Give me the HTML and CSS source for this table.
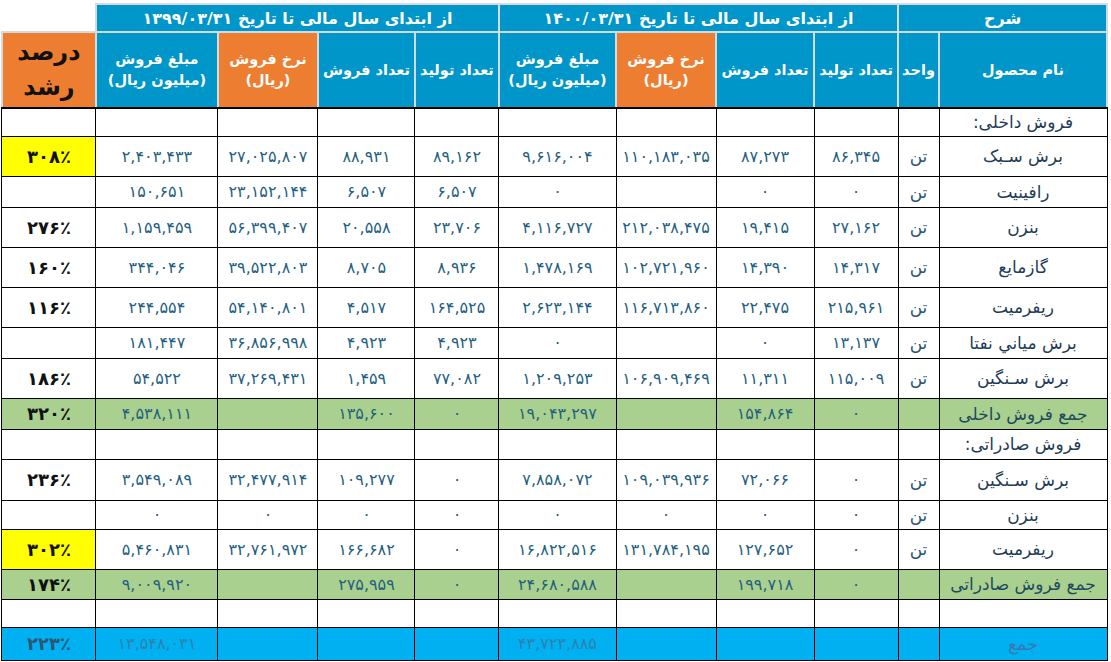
FILE: index.html
```html
<!DOCTYPE html>
<html lang="fa" dir="rtl">
<head>
<meta charset="utf-8">
<title>گزارش فروش</title>
<link rel="stylesheet" href="styles.css">
</head>
<body>
<table class="report">
  <colgroup>
    <col class="c-name"><col class="c-unit"><col class="c-prod"><col class="c-sales"><col class="c-rate"><col class="c-amt">
    <col class="c-prod2"><col class="c-sales2"><col class="c-rate2"><col class="c-amt2"><col class="c-pct">
  </colgroup>
  <thead>
    <tr class="h1">
      <th colspan="2" class="hb">شرح</th>
      <th colspan="4" class="hb">از ابتدای سال مالی تا تاریخ ۱۴۰۰/۰۳/۳۱</th>
      <th colspan="4" class="hb">از ابتدای سال مالی تا تاریخ ۱۳۹۹/۰۳/۳۱</th>
      <th class="corner"></th>
    </tr>
    <tr class="h2">
      <th class="hb">نام محصول</th>
      <th class="hb">واحد</th>
      <th class="hb">تعداد تولید</th>
      <th class="hb">تعداد فروش</th>
      <th class="ho">نرخ فروش<br>(ریال)</th>
      <th class="hb">مبلغ فروش<br>(میلیون ریال)</th>
      <th class="hb">تعداد تولید</th>
      <th class="hb">تعداد فروش</th>
      <th class="ho">نرخ فروش<br>(ریال)</th>
      <th class="hb">مبلغ فروش<br>(میلیون ریال)</th>
      <th class="ho pct-h">درصد<br>رشد</th>
    </tr>
  </thead>
  <tbody>
    <tr class="r28"><td class="name">فروش داخلی:</td><td></td><td></td><td></td><td></td><td></td><td></td><td></td><td></td><td></td><td></td></tr>
    <tr class="r40"><td class="name">برش سـبک</td><td class="unit">تن</td><td>۸۶,۳۴۵</td><td>۸۷,۲۷۳</td><td>۱۱۰,۱۸۳,۰۳۵</td><td>۹,۶۱۶,۰۰۴</td><td>۸۹,۱۶۲</td><td>۸۸,۹۳۱</td><td>۲۷,۰۲۵,۸۰۷</td><td>۲,۴۰۳,۴۳۳</td><td class="pct yellow">۳۰۸٪</td></tr>
    <tr class="r31"><td class="name">رافینیت</td><td class="unit">تن</td><td>۰</td><td>۰</td><td></td><td>۰</td><td>۶,۵۰۷</td><td>۶,۵۰۷</td><td>۲۳,۱۵۲,۱۴۴</td><td>۱۵۰,۶۵۱</td><td class="pct"></td></tr>
    <tr class="r40"><td class="name">بنزن</td><td class="unit">تن</td><td>۲۷,۱۶۲</td><td>۱۹,۴۱۵</td><td>۲۱۲,۰۳۸,۴۷۵</td><td>۴,۱۱۶,۷۲۷</td><td>۲۳,۷۰۶</td><td>۲۰,۵۵۸</td><td>۵۶,۳۹۹,۴۰۷</td><td>۱,۱۵۹,۴۵۹</td><td class="pct">۲۷۶٪</td></tr>
    <tr class="r40"><td class="name">گازمایع</td><td class="unit">تن</td><td>۱۴,۳۱۷</td><td>۱۴,۳۹۰</td><td>۱۰۲,۷۲۱,۹۶۰</td><td>۱,۴۷۸,۱۶۹</td><td>۸,۹۳۶</td><td>۸,۷۰۵</td><td>۳۹,۵۲۲,۸۰۳</td><td>۳۴۴,۰۴۶</td><td class="pct">۱۶۰٪</td></tr>
    <tr class="r40"><td class="name">ریفرمیت</td><td class="unit">تن</td><td>۲۱۵,۹۶۱</td><td>۲۲,۴۷۵</td><td>۱۱۶,۷۱۳,۸۶۰</td><td>۲,۶۲۳,۱۴۴</td><td>۱۶۴,۵۲۵</td><td>۴,۵۱۷</td><td>۵۴,۱۴۰,۸۰۱</td><td>۲۴۴,۵۵۴</td><td class="pct">۱۱۶٪</td></tr>
    <tr class="r31"><td class="name">برش میاني نفتا</td><td class="unit">تن</td><td>۱۳,۱۳۷</td><td>۰</td><td></td><td>۰</td><td>۴,۹۲۳</td><td>۴,۹۲۳</td><td>۳۶,۸۵۶,۹۹۸</td><td>۱۸۱,۴۴۷</td><td class="pct"></td></tr>
    <tr class="r40"><td class="name">برش سـنگین</td><td class="unit">تن</td><td>۱۱۵,۰۰۹</td><td>۱۱,۳۱۱</td><td>۱۰۶,۹۰۹,۴۶۹</td><td>۱,۲۰۹,۲۵۳</td><td>۷۷,۰۸۲</td><td>۱,۴۵۹</td><td>۳۷,۲۶۹,۴۳۱</td><td>۵۴,۵۲۲</td><td class="pct">۱۸۶٪</td></tr>
    <tr class="r31 green"><td class="name">جمع فروش داخلی</td><td></td><td>۰</td><td>۱۵۴,۸۶۴</td><td></td><td>۱۹,۰۴۳,۲۹۷</td><td>۰</td><td>۱۳۵,۶۰۰</td><td></td><td>۴,۵۳۸,۱۱۱</td><td class="pct">۳۲۰٪</td></tr>
    <tr class="r30"><td class="name">فروش صادراتی:</td><td></td><td></td><td></td><td></td><td></td><td></td><td></td><td></td><td></td><td></td></tr>
    <tr class="r41"><td class="name">برش سـنگین</td><td class="unit">تن</td><td>۰</td><td>۷۲,۰۶۶</td><td>۱۰۹,۰۳۹,۹۳۶</td><td>۷,۸۵۸,۰۷۲</td><td>۰</td><td>۱۰۹,۲۷۷</td><td>۳۲,۴۷۷,۹۱۴</td><td>۳,۵۴۹,۰۸۹</td><td class="pct">۲۳۶٪</td></tr>
    <tr class="r29"><td class="name">بنزن</td><td class="unit">تن</td><td>۰</td><td>۰</td><td>۰</td><td>۰</td><td>۰</td><td>۰</td><td>۰</td><td>۰</td><td class="pct"></td></tr>
    <tr class="r40"><td class="name">ریفرمیت</td><td class="unit">تن</td><td>۰</td><td>۱۲۷,۶۵۲</td><td>۱۳۱,۷۸۴,۱۹۵</td><td>۱۶,۸۲۲,۵۱۶</td><td>۰</td><td>۱۶۶,۶۸۲</td><td>۳۲,۷۶۱,۹۷۲</td><td>۵,۴۶۰,۸۳۱</td><td class="pct yellow">۳۰۲٪</td></tr>
    <tr class="r30 green"><td class="name">جمع فروش صادراتی</td><td></td><td>۰</td><td>۱۹۹,۷۱۸</td><td></td><td>۲۴,۶۸۰,۵۸۸</td><td>۰</td><td>۲۷۵,۹۵۹</td><td></td><td>۹,۰۰۹,۹۲۰</td><td class="pct">۱۷۴٪</td></tr>
    <tr class="r28"><td></td><td></td><td></td><td></td><td></td><td></td><td></td><td></td><td></td><td></td><td></td></tr>
    <tr class="r33 total"><td class="name">جمع</td><td></td><td></td><td></td><td></td><td>۴۳,۷۲۳,۸۸۵</td><td></td><td></td><td></td><td>۱۳,۵۴۸,۰۳۱</td><td class="pct">۲۲۳٪</td></tr>
  </tbody>
</table>
</body>
</html>
```

FILE: styles.css
```css
html, body {
  margin: 0;
  padding: 0;
  background: #ffffff;
  overflow: hidden;
}
body {
  padding: 3px;
  font-family: "DejaVu Sans", "Noto Sans", sans-serif;
}
.report {
  border-collapse: collapse;
  table-layout: fixed;
  width: 1105px;
}
.c-name { width: 168px; }
.c-unit { width: 41px; }
.c-prod { width: 84px; }
.c-sales { width: 98px; }
.c-rate { width: 100px; }
.c-amt { width: 117px; }
.c-prod2 { width: 84px; }
.c-sales2 { width: 97px; }
.c-rate2 { width: 100px; }
.c-amt2 { width: 122px; }
.c-pct { width: 94px; }

th {
  padding: 0;
  font-weight: bold;
  color: #ffffff;
  text-align: center;
  vertical-align: middle;
  white-space: nowrap;
}
.hb {
  background: #0096c9;
  border: 2px solid #d3dae0;
}
.ho {
  background: #ed7d31;
  border: 2px solid #d3dae0;
}
.h1 { height: 28px; }
.h1 th { font-size: 16px; }
.h2 { height: 76px; }
.h2 th { font-size: 14.5px; line-height: 21px; border-bottom: 2px solid #000; }
.corner { background: #ffffff; border: none; }
.h2 th.pct-h {
  color: #111111;
  font-weight: bold;
  font-size: 24px;
  line-height: 35px;
}

td {
  padding: 0;
  border: 1px solid #000000;
  text-align: center;
  vertical-align: middle;
  font-size: 16px;
  color: #23607f;
  white-space: nowrap;
}
td.name { color: #1f3c56; font-size: 17px; }
td.unit { color: #2a5472; font-size: 17px; }
td.pct {
  color: #111111;
  font-weight: bold;
  font-size: 18px;
}
td.yellow { background: #ffff00; }

.r28 { height: 28px; }
.r29 { height: 29px; }
.r30 { height: 30px; }
.r31 { height: 31px; }
.r33 { height: 33px; }
.r40 { height: 40px; }
.r41 { height: 41px; }

.green td { background: #a9d08e; }
.green td.name { color: #1f4a5e; }
.total td { background: #00b0f0; color: #2f80b0; }
.total td.name { color: #3a78b0; }
.total td.pct { color: #2e5674; }
```
